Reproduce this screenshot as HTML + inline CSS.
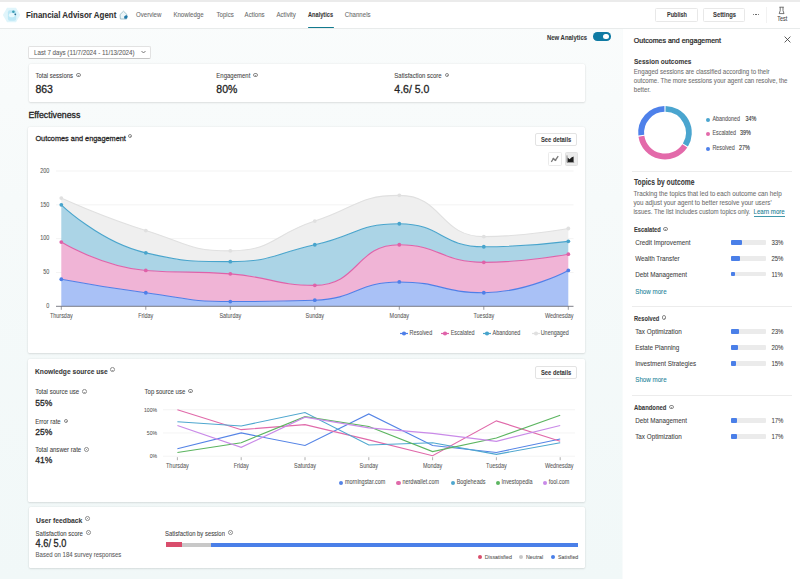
<!DOCTYPE html>
<html><head><meta charset="utf-8"><title>Analytics</title>
<style>
html,body{margin:0;padding:0;}
body{width:800px;height:579px;overflow:hidden;position:relative;font-family:"Liberation Sans", sans-serif;background:#f0f8f8;}
.t{position:absolute;white-space:pre;-webkit-text-stroke:0.06px currentColor;transform:scaleY(1.18);transform-origin:0 50%;}
.b{position:absolute;}
</style></head><body>
<div class="b" style="left:0px;top:0px;width:800px;height:579px;background:linear-gradient(to bottom,#fafcfc 0px,#f6fafa 200px,#f1f8f8 579px)"></div><div class="b" style="left:0px;top:0px;width:800px;height:2px;background:#ebebeb"></div><div class="b" style="left:0px;top:2px;width:800px;height:25.5px;background:#ffffff;border-bottom:1px solid #e8ebeb"></div><svg class="b" style="left:2px;top:6px" width="19" height="18" viewBox="0 0 19 18"><polygon points="5,1.8 14,1.8 18.3,9 14,16.3 5,16.3 0.9,9" fill="#e0f5fb"/><rect x="5.9" y="4.3" width="8.3" height="10.5" rx="2" fill="#bde8f6"/><ellipse cx="9.8" cy="9.2" rx="3" ry="2.1" fill="#e8f9fd"/><circle cx="11.4" cy="5.8" r="1.3" fill="#3c9fb6"/><circle cx="13.3" cy="8.3" r="0.9" fill="#2d6f96"/></svg><div class="t" style="left:25.5px;top:9.11px;font-size:8.53px;line-height:12.18px;font-weight:700;transform:scale(0.9327,1.14);transform-origin:0 50%;color:#303030;">Financial Advisor Agent</div><svg class="b" style="left:118px;top:9px" width="11" height="12" viewBox="0 0 11 12"><path d="M5.5,2.2 L9,5.6 L8.6,10 L2.4,10 L2,5.6 Z" fill="#eef6f8" stroke="#8db4bf" stroke-width="0.75"/><path d="M6.2,9.6 L6.6,7.2 L8.6,6.2 L9.6,7.4 L8.4,9.4 Z" fill="#1d6f9c"/><circle cx="7.9" cy="8" r="1.5" fill="#1f79aa"/></svg><div class="t" style="left:136px;top:11.23px;font-size:6.1px;line-height:8.54px;font-weight:400;color:#686868;">Overview</div><div class="t" style="left:173.4px;top:11.23px;font-size:6.1px;line-height:8.54px;font-weight:400;color:#686868;">Knowledge</div><div class="t" style="left:216.5px;top:11.23px;font-size:6.1px;line-height:8.54px;font-weight:400;color:#686868;">Topics</div><div class="t" style="left:244.6px;top:11.23px;font-size:6.1px;line-height:8.54px;font-weight:400;color:#686868;">Actions</div><div class="t" style="left:276.5px;top:11.23px;font-size:6.1px;line-height:8.54px;font-weight:400;color:#686868;">Activity</div><div class="t" style="left:308.2px;top:10.81px;font-size:6.14px;line-height:8.78px;font-weight:700;transform:scale(0.9184,1.14);transform-origin:0 50%;color:#383838;">Analytics</div><div class="t" style="left:344.8px;top:11.23px;font-size:6.1px;line-height:8.54px;font-weight:400;color:#686868;">Channels</div><div class="b" style="left:307.8px;top:26.8px;width:25.8px;height:1.6px;background:#127a8e;border-radius:1px"></div><div class="b" style="left:655px;top:8.4px;width:43px;height:13.2px;background:#fff;border:0.8px solid #e8e8e8;border-radius:1.5px;box-sizing:border-box"></div><div class="t" style="left:666.8px;top:11.33px;font-size:5.98px;line-height:8.54px;font-weight:700;transform:scale(0.9268,1.14);transform-origin:0 50%;color:#383838;">Publish</div><div class="b" style="left:703px;top:8.4px;width:42px;height:13.2px;background:#fff;border:0.8px solid #e8e8e8;border-radius:1.5px;box-sizing:border-box"></div><div class="t" style="left:712.8px;top:11.14px;font-size:6.24px;line-height:8.92px;font-weight:700;transform:scale(0.9347,1.14);transform-origin:0 50%;color:#383838;">Settings</div><div class="b" style="left:752.8px;top:14.0px;width:1.2px;height:1.2px;background:#555;border-radius:50%"></div><div class="b" style="left:755.4px;top:14.0px;width:1.2px;height:1.2px;background:#555;border-radius:50%"></div><div class="b" style="left:758.0px;top:14.0px;width:1.2px;height:1.2px;background:#555;border-radius:50%"></div><div class="b" style="left:765.5px;top:7px;width:0.7px;height:16px;background:#f2f2f2"></div><svg class="b" style="left:777px;top:6px" width="10" height="9" viewBox="0 0 10 9"><path d="M2.4,1.2 H6.8 M3.2,1.2 V4.6 L2.2,7.6 H7 L6,4.6 V1.2" fill="none" stroke="#4a4a4a" stroke-width="0.75"/></svg><div class="t" style="left:777.2px;top:15.99px;font-size:5.45px;line-height:7.63px;font-weight:400;color:#424242;">Test</div><div class="b" style="left:28.4px;top:46.3px;width:122.6px;height:12.4px;background:#fff;border:0.7px solid #e2e2e2;border-bottom-color:#c4c4c4;border-radius:2px;box-sizing:border-box"></div><div class="t" style="left:34px;top:48.76px;font-size:6.2px;line-height:8.68px;font-weight:400;color:#606060;">Last 7 days (11/7/2024 - 11/13/2024)</div><svg class="b" style="left:140.5px;top:50.3px" width="5" height="4" viewBox="0 0 5 4"><path d="M0.5,1 L2.5,3 L4.5,1" fill="none" stroke="#555" stroke-width="0.8"/></svg><div class="t" style="left:547px;top:32.50px;font-size:6.30px;line-height:9.0px;font-weight:700;transform:scale(0.9420,1.14);transform-origin:0 50%;color:#383838;">New Analytics</div><div class="b" style="left:592.7px;top:32.2px;width:18.2px;height:8.6px;background:#0f7aa3;border-radius:4.3px"></div><div class="b" style="left:603.2px;top:33.6px;width:5.8px;height:5.8px;background:#fff;border-radius:50%"></div><div class="b" style="left:28.5px;top:64.4px;width:556px;height:37.5px;background:#fff;border-radius:1.5px;box-shadow:0 0 2px rgba(0,0,0,0.09),0 1px 2px rgba(0,0,0,0.09)"></div><div class="t" style="left:35.4px;top:71.60px;font-size:6.0px;line-height:8.4px;font-weight:400;color:#424242;">Total sessions</div><div class="b" style="left:75.98px;top:72.70px;width:4.8px;height:4.8px;border:0.65px solid #8c8c8c;border-radius:50%;box-sizing:border-box"></div><div class="b" style="left:78.08px;top:74.80px;width:0.6px;height:1.3px;background:#a0a0a0"></div><div class="t" style="left:35.4px;top:81.55px;font-size:10.5px;line-height:14.7px;font-weight:400;color:#242424;-webkit-text-stroke:0.28px #242424;transform:scaleY(1.1)">863</div><div class="t" style="left:216.3px;top:71.60px;font-size:6.0px;line-height:8.4px;font-weight:400;color:#424242;">Engagement</div><div class="b" style="left:253.22px;top:72.70px;width:4.8px;height:4.8px;border:0.65px solid #8c8c8c;border-radius:50%;box-sizing:border-box"></div><div class="b" style="left:255.32px;top:74.80px;width:0.6px;height:1.3px;background:#a0a0a0"></div><div class="t" style="left:216.3px;top:81.55px;font-size:10.5px;line-height:14.7px;font-weight:400;color:#242424;-webkit-text-stroke:0.28px #242424;transform:scaleY(1.1)">80%</div><div class="t" style="left:394.3px;top:71.60px;font-size:6.0px;line-height:8.4px;font-weight:400;color:#424242;">Satisfaction score</div><div class="b" style="left:444.55px;top:72.70px;width:4.8px;height:4.8px;border:0.65px solid #8c8c8c;border-radius:50%;box-sizing:border-box"></div><div class="b" style="left:446.65px;top:74.80px;width:0.6px;height:1.3px;background:#a0a0a0"></div><div class="t" style="left:394.3px;top:81.55px;font-size:10.5px;line-height:14.7px;font-weight:400;color:#242424;-webkit-text-stroke:0.28px #242424;transform:scaleY(1.1)">4.6/ 5.0</div><div class="t" style="left:28.4px;top:108.76px;font-size:8.77px;line-height:12.28px;font-weight:400;color:#242424;-webkit-text-stroke:0.3px #242424;transform:scaleY(1.06)">Effectiveness</div><div class="b" style="left:28.3px;top:127.0px;width:556.5px;height:226.0px;background:#fff;border-radius:1.5px;box-shadow:0 0 2px rgba(0,0,0,0.09),0 1px 2px rgba(0,0,0,0.09)"></div><div class="t" style="left:35.4px;top:134.16px;font-size:7.34px;line-height:10.28px;font-weight:400;color:#242424;-webkit-text-stroke:0.25px #242424;transform:scaleY(1.1)">Outcomes and engagement</div><div class="b" style="left:127.68px;top:133.60px;width:4.8px;height:4.8px;border:0.65px solid #8c8c8c;border-radius:50%;box-sizing:border-box"></div><div class="b" style="left:129.78px;top:135.70px;width:0.6px;height:1.3px;background:#a0a0a0"></div><div class="b" style="left:535.2px;top:132.6px;width:42.2px;height:13.4px;background:#fff;border:0.7px solid #e3e3e3;border-radius:2px;box-sizing:border-box"></div><div class="t" style="left:541.2px;top:136.31px;font-size:6.00px;line-height:8.57px;font-weight:700;transform:scale(0.9663,1.14);transform-origin:0 50%;color:#383838;">See details</div><div class="b" style="left:548px;top:152px;width:13.5px;height:13.6px;background:#fff;border:0.7px solid #ebebeb;border-radius:1.5px;box-sizing:border-box"></div><div class="b" style="left:564.5px;top:152px;width:13.5px;height:13.6px;background:#ececec;border:0.7px solid #e2e2e2;border-radius:1.5px;box-sizing:border-box"></div><svg class="b" style="left:0;top:0" width="800" height="579" viewBox="0 0 800 579"><path d="M551.3,161.8 L553.4,158.6 L555.4,160.2 L558.2,156.2" fill="none" stroke="#7a7a7a" stroke-width="1.3"/><circle cx="553.4" cy="158.6" r="0.9" fill="#7a7a7a"/><circle cx="555.4" cy="160.2" r="0.9" fill="#7a7a7a"/><path d="M567.6,162 V157.6 L569.6,159.2 L571.4,157.6 L573.6,156.6 V162 Z" fill="#1e1e1e"/><path d="M567,155.4 V162.4 H574.2" fill="none" stroke="#555" stroke-width="0.6"/></svg><svg class="b" style="left:0;top:0" width="800" height="579" viewBox="0 0 800 579"><line x1="56" y1="272.48" x2="573.5" y2="272.48" stroke="#ebebeb" stroke-width="0.6"/><line x1="56" y1="238.65" x2="573.5" y2="238.65" stroke="#ebebeb" stroke-width="0.6"/><line x1="56" y1="204.83" x2="573.5" y2="204.83" stroke="#ebebeb" stroke-width="0.6"/><line x1="56" y1="171.00" x2="573.5" y2="171.00" stroke="#ebebeb" stroke-width="0.6"/><path d="M61.30,279.24 C61.30,279.24 103.40,287.17 145.80,292.77 C187.90,298.33 187.94,301.56 230.30,301.56 C272.44,301.56 273.03,301.56 314.80,300.21 C357.53,298.83 356.74,281.95 399.30,281.95 C441.24,281.95 442.09,292.77 483.80,292.77 C526.59,292.77 568.30,270.45 568.30,270.45 L568.30,306.30 C568.30,306.30 526.05,306.30 483.80,306.30 C441.55,306.30 441.55,306.30 399.30,306.30 C357.05,306.30 357.05,306.30 314.80,306.30 C272.55,306.30 272.55,306.30 230.30,306.30 C188.05,306.30 188.05,306.30 145.80,306.30 C103.55,306.30 61.30,306.30 61.30,306.30 Z" fill="#a9c1f6"/><path d="M61.30,242.03 C61.30,242.03 102.44,266.88 145.80,270.45 C186.94,273.83 188.23,270.45 230.30,273.83 C272.73,277.24 274.55,285.33 314.80,285.33 C359.05,285.33 355.31,244.74 399.30,244.74 C439.81,244.74 441.20,262.33 483.80,262.33 C525.70,262.33 568.30,254.21 568.30,254.21 L568.30,270.45 C568.30,270.45 526.59,292.77 483.80,292.77 C442.09,292.77 441.24,281.95 399.30,281.95 C356.74,281.95 357.53,298.83 314.80,300.21 C273.03,301.56 272.44,301.56 230.30,301.56 C187.94,301.56 187.90,298.33 145.80,292.77 C103.40,287.17 61.30,279.24 61.30,279.24 Z" fill="#f0b4d6"/><path d="M61.30,204.83 C61.30,204.83 100.71,242.79 145.80,252.86 C185.21,261.65 188.35,261.65 230.30,261.65 C272.85,261.65 272.77,254.16 314.80,244.74 C357.27,235.22 357.17,223.77 399.30,223.77 C441.67,223.77 440.84,246.77 483.80,246.77 C525.34,246.77 568.30,241.36 568.30,241.36 L568.30,254.21 C568.30,254.21 525.70,262.33 483.80,262.33 C441.20,262.33 439.81,244.74 399.30,244.74 C355.31,244.74 359.05,285.33 314.80,285.33 C274.55,285.33 272.73,277.24 230.30,273.83 C188.23,270.45 186.94,273.83 145.80,270.45 C102.44,266.88 61.30,242.03 61.30,242.03 Z" fill="#abd4e6"/><path d="M61.30,198.06 C61.30,198.06 102.69,217.07 145.80,230.53 C187.19,243.45 188.69,250.83 230.30,250.83 C273.19,250.83 272.25,235.03 314.80,221.06 C356.75,207.29 358.37,195.35 399.30,195.35 C442.87,195.35 439.39,236.62 483.80,236.62 C523.89,236.62 568.30,228.50 568.30,228.50 L568.30,241.36 C568.30,241.36 525.34,246.77 483.80,246.77 C440.84,246.77 441.67,223.77 399.30,223.77 C357.17,223.77 357.27,235.22 314.80,244.74 C272.77,254.16 272.85,261.65 230.30,261.65 C188.35,261.65 185.21,261.65 145.80,252.86 C100.71,242.79 61.30,204.83 61.30,204.83 Z" fill="#efefef"/><path d="M61.30,279.24 C61.30,279.24 103.40,287.17 145.80,292.77 C187.90,298.33 187.94,301.56 230.30,301.56 C272.44,301.56 273.03,301.56 314.80,300.21 C357.53,298.83 356.74,281.95 399.30,281.95 C441.24,281.95 442.09,292.77 483.80,292.77 C526.59,292.77 568.30,270.45 568.30,270.45" fill="none" stroke="#4f7fe8" stroke-width="1.1"/><circle cx="61.30" cy="279.24" r="1.9" fill="#4f7fe8"/><circle cx="145.80" cy="292.77" r="1.9" fill="#4f7fe8"/><circle cx="230.30" cy="301.56" r="1.9" fill="#4f7fe8"/><circle cx="314.80" cy="300.21" r="1.9" fill="#4f7fe8"/><circle cx="399.30" cy="281.95" r="1.9" fill="#4f7fe8"/><circle cx="483.80" cy="292.77" r="1.9" fill="#4f7fe8"/><circle cx="568.30" cy="270.45" r="1.9" fill="#4f7fe8"/><path d="M61.30,242.03 C61.30,242.03 102.44,266.88 145.80,270.45 C186.94,273.83 188.23,270.45 230.30,273.83 C272.73,277.24 274.55,285.33 314.80,285.33 C359.05,285.33 355.31,244.74 399.30,244.74 C439.81,244.74 441.20,262.33 483.80,262.33 C525.70,262.33 568.30,254.21 568.30,254.21" fill="none" stroke="#df62a9" stroke-width="1.1"/><circle cx="61.30" cy="242.03" r="1.9" fill="#df62a9"/><circle cx="145.80" cy="270.45" r="1.9" fill="#df62a9"/><circle cx="230.30" cy="273.83" r="1.9" fill="#df62a9"/><circle cx="314.80" cy="285.33" r="1.9" fill="#df62a9"/><circle cx="399.30" cy="244.74" r="1.9" fill="#df62a9"/><circle cx="483.80" cy="262.33" r="1.9" fill="#df62a9"/><circle cx="568.30" cy="254.21" r="1.9" fill="#df62a9"/><path d="M61.30,204.83 C61.30,204.83 100.71,242.79 145.80,252.86 C185.21,261.65 188.35,261.65 230.30,261.65 C272.85,261.65 272.77,254.16 314.80,244.74 C357.27,235.22 357.17,223.77 399.30,223.77 C441.67,223.77 440.84,246.77 483.80,246.77 C525.34,246.77 568.30,241.36 568.30,241.36" fill="none" stroke="#48a4cc" stroke-width="1.1"/><circle cx="61.30" cy="204.83" r="1.9" fill="#48a4cc"/><circle cx="145.80" cy="252.86" r="1.9" fill="#48a4cc"/><circle cx="230.30" cy="261.65" r="1.9" fill="#48a4cc"/><circle cx="314.80" cy="244.74" r="1.9" fill="#48a4cc"/><circle cx="399.30" cy="223.77" r="1.9" fill="#48a4cc"/><circle cx="483.80" cy="246.77" r="1.9" fill="#48a4cc"/><circle cx="568.30" cy="241.36" r="1.9" fill="#48a4cc"/><path d="M61.30,198.06 C61.30,198.06 102.69,217.07 145.80,230.53 C187.19,243.45 188.69,250.83 230.30,250.83 C273.19,250.83 272.25,235.03 314.80,221.06 C356.75,207.29 358.37,195.35 399.30,195.35 C442.87,195.35 439.39,236.62 483.80,236.62 C523.89,236.62 568.30,228.50 568.30,228.50" fill="none" stroke="#e0e0e0" stroke-width="1.1"/><circle cx="61.30" cy="198.06" r="1.9" fill="#e0e0e0"/><circle cx="145.80" cy="230.53" r="1.9" fill="#e0e0e0"/><circle cx="230.30" cy="250.83" r="1.9" fill="#e0e0e0"/><circle cx="314.80" cy="221.06" r="1.9" fill="#e0e0e0"/><circle cx="399.30" cy="195.35" r="1.9" fill="#e0e0e0"/><circle cx="483.80" cy="236.62" r="1.9" fill="#e0e0e0"/><circle cx="568.30" cy="228.50" r="1.9" fill="#e0e0e0"/><line x1="56" y1="306.3" x2="573.5" y2="306.3" stroke="#6e7079" stroke-width="0.9"/><line x1="61.30" y1="306.3" x2="61.30" y2="309.8" stroke="#6e7079" stroke-width="0.7"/><line x1="145.80" y1="306.3" x2="145.80" y2="309.8" stroke="#6e7079" stroke-width="0.7"/><line x1="230.30" y1="306.3" x2="230.30" y2="309.8" stroke="#6e7079" stroke-width="0.7"/><line x1="314.80" y1="306.3" x2="314.80" y2="309.8" stroke="#6e7079" stroke-width="0.7"/><line x1="399.30" y1="306.3" x2="399.30" y2="309.8" stroke="#6e7079" stroke-width="0.7"/><line x1="483.80" y1="306.3" x2="483.80" y2="309.8" stroke="#6e7079" stroke-width="0.7"/><line x1="568.30" y1="306.3" x2="568.30" y2="309.8" stroke="#6e7079" stroke-width="0.7"/></svg><div class="t" style="right:750.7px;top:303.09px;font-size:5.45px;line-height:7.63px;font-weight:400;color:#5a5a5a;text-align:right;">0</div><div class="t" style="right:750.7px;top:269.26px;font-size:5.45px;line-height:7.63px;font-weight:400;color:#5a5a5a;text-align:right;">50</div><div class="t" style="right:750.7px;top:235.44px;font-size:5.45px;line-height:7.63px;font-weight:400;color:#5a5a5a;text-align:right;">100</div><div class="t" style="right:750.7px;top:201.61px;font-size:5.45px;line-height:7.63px;font-weight:400;color:#5a5a5a;text-align:right;">150</div><div class="t" style="right:750.7px;top:167.78px;font-size:5.45px;line-height:7.63px;font-weight:400;color:#5a5a5a;text-align:right;">200</div><div class="t" style="left:31.30px;width:60px;text-align:center;top:313.40px;font-size:5.45px;line-height:7.6px;color:#5a5a5a">Thursday</div><div class="t" style="left:115.80px;width:60px;text-align:center;top:313.40px;font-size:5.45px;line-height:7.6px;color:#5a5a5a">Friday</div><div class="t" style="left:200.30px;width:60px;text-align:center;top:313.40px;font-size:5.45px;line-height:7.6px;color:#5a5a5a">Saturday</div><div class="t" style="left:284.80px;width:60px;text-align:center;top:313.40px;font-size:5.45px;line-height:7.6px;color:#5a5a5a">Sunday</div><div class="t" style="left:369.30px;width:60px;text-align:center;top:313.40px;font-size:5.45px;line-height:7.6px;color:#5a5a5a">Monday</div><div class="t" style="left:453.80px;width:60px;text-align:center;top:313.40px;font-size:5.45px;line-height:7.6px;color:#5a5a5a">Tuesday</div><div class="t" style="right:226.5px;top:313.38px;font-size:5.45px;line-height:7.63px;font-weight:400;color:#5a5a5a;text-align:right;">Wednesday</div><svg class="b" style="left:400px;top:330.9px" width="8" height="5" viewBox="0 0 8 5"><line x1="0" y1="2.5" x2="8" y2="2.5" stroke="#4f7fe8" stroke-width="1.2"/><circle cx="4" cy="2.5" r="2.1" fill="#4f7fe8"/></svg><div class="t" style="left:409.5px;top:329.79px;font-size:5.45px;line-height:7.63px;font-weight:400;color:#555555;">Resolved</div><svg class="b" style="left:440.5px;top:330.9px" width="8" height="5" viewBox="0 0 8 5"><line x1="0" y1="2.5" x2="8" y2="2.5" stroke="#df62a9" stroke-width="1.2"/><circle cx="4" cy="2.5" r="2.1" fill="#df62a9"/></svg><div class="t" style="left:450.7px;top:329.79px;font-size:5.45px;line-height:7.63px;font-weight:400;color:#555555;">Escalated</div><svg class="b" style="left:483px;top:330.9px" width="8" height="5" viewBox="0 0 8 5"><line x1="0" y1="2.5" x2="8" y2="2.5" stroke="#48a4cc" stroke-width="1.2"/><circle cx="4" cy="2.5" r="2.1" fill="#48a4cc"/></svg><div class="t" style="left:492.5px;top:329.79px;font-size:5.45px;line-height:7.63px;font-weight:400;color:#555555;">Abandoned</div><svg class="b" style="left:531.5px;top:330.9px" width="8" height="5" viewBox="0 0 8 5"><line x1="0" y1="2.5" x2="8" y2="2.5" stroke="#e0e0e0" stroke-width="1.2"/><circle cx="4" cy="2.5" r="2.1" fill="#e0e0e0"/></svg><div class="t" style="left:540.7px;top:329.79px;font-size:5.45px;line-height:7.63px;font-weight:400;color:#555555;">Unengaged</div><div class="b" style="left:28.4px;top:358.8px;width:556.7px;height:143.0px;background:#fff;border-radius:1.5px;box-shadow:0 0 2px rgba(0,0,0,0.09),0 1px 2px rgba(0,0,0,0.09)"></div><div class="t" style="left:35.2px;top:367.36px;font-size:7.06px;line-height:10.08px;font-weight:700;transform:scale(0.9479,1.14);transform-origin:0 50%;color:#383838;">Knowledge source use</div><div class="b" style="left:109.74px;top:367.40px;width:4.8px;height:4.8px;border:0.65px solid #8c8c8c;border-radius:50%;box-sizing:border-box"></div><div class="b" style="left:111.84px;top:369.50px;width:0.6px;height:1.3px;background:#a0a0a0"></div><div class="b" style="left:535.2px;top:366.4px;width:42.2px;height:13px;background:#fff;border:0.7px solid #e3e3e3;border-radius:2px;box-sizing:border-box"></div><div class="t" style="left:541.2px;top:369.31px;font-size:6.00px;line-height:8.57px;font-weight:700;transform:scale(0.9663,1.14);transform-origin:0 50%;color:#383838;">See details</div><div class="t" style="left:35.2px;top:388.46px;font-size:6.05px;line-height:8.47px;font-weight:400;color:#424242;">Total source use</div><div class="b" style="left:82.15px;top:389.40px;width:4.8px;height:4.8px;border:0.65px solid #8c8c8c;border-radius:50%;box-sizing:border-box"></div><div class="b" style="left:84.25px;top:391.50px;width:0.6px;height:1.3px;background:#a0a0a0"></div><div class="t" style="left:35.2px;top:398.45px;font-size:8.5px;line-height:11.9px;font-weight:400;color:#242424;-webkit-text-stroke:0.26px #242424;transform:scaleY(1.1)">55%</div><div class="t" style="left:35.2px;top:417.56px;font-size:6.05px;line-height:8.47px;font-weight:400;color:#424242;">Error rate</div><div class="b" style="left:63.65px;top:418.50px;width:4.8px;height:4.8px;border:0.65px solid #8c8c8c;border-radius:50%;box-sizing:border-box"></div><div class="b" style="left:65.75px;top:420.60px;width:0.6px;height:1.3px;background:#a0a0a0"></div><div class="t" style="left:35.2px;top:427.05px;font-size:8.5px;line-height:11.9px;font-weight:400;color:#242424;-webkit-text-stroke:0.26px #242424;transform:scaleY(1.1)">25%</div><div class="t" style="left:35.2px;top:445.96px;font-size:6.05px;line-height:8.47px;font-weight:400;color:#424242;">Total answer rate</div><div class="b" style="left:84.17px;top:446.90px;width:4.8px;height:4.8px;border:0.65px solid #8c8c8c;border-radius:50%;box-sizing:border-box"></div><div class="b" style="left:86.27px;top:449.00px;width:0.6px;height:1.3px;background:#a0a0a0"></div><div class="t" style="left:35.2px;top:455.35px;font-size:8.5px;line-height:11.9px;font-weight:400;color:#242424;-webkit-text-stroke:0.26px #242424;transform:scaleY(1.1)">41%</div><div class="t" style="left:144.6px;top:387.80px;font-size:6.0px;line-height:8.4px;font-weight:400;color:#424242;">Top source use</div><div class="b" style="left:188.19px;top:388.70px;width:4.8px;height:4.8px;border:0.65px solid #8c8c8c;border-radius:50%;box-sizing:border-box"></div><div class="b" style="left:190.29px;top:390.80px;width:0.6px;height:1.3px;background:#a0a0a0"></div><svg class="b" style="left:0;top:0" width="800" height="579" viewBox="0 0 800 579"><line x1="163" y1="456.20" x2="575" y2="456.20" stroke="#ededed" stroke-width="0.6"/><line x1="163" y1="432.95" x2="575" y2="432.95" stroke="#ededed" stroke-width="0.6"/><line x1="163" y1="409.70" x2="575" y2="409.70" stroke="#ededed" stroke-width="0.6"/><line x1="177.40" y1="457.2" x2="177.40" y2="460.2" stroke="#7a7a7a" stroke-width="0.6"/><line x1="241.20" y1="457.2" x2="241.20" y2="460.2" stroke="#7a7a7a" stroke-width="0.6"/><line x1="305.00" y1="457.2" x2="305.00" y2="460.2" stroke="#7a7a7a" stroke-width="0.6"/><line x1="368.80" y1="457.2" x2="368.80" y2="460.2" stroke="#7a7a7a" stroke-width="0.6"/><line x1="432.60" y1="457.2" x2="432.60" y2="460.2" stroke="#7a7a7a" stroke-width="0.6"/><line x1="496.40" y1="457.2" x2="496.40" y2="460.2" stroke="#7a7a7a" stroke-width="0.6"/><line x1="560.20" y1="457.2" x2="560.20" y2="460.2" stroke="#7a7a7a" stroke-width="0.6"/><polyline points="177.40,448.76 241.20,432.95 305.00,445.50 368.80,413.88 432.60,445.50 496.40,452.48 560.20,439.00" fill="none" stroke="#5584e6" stroke-width="1.15"/><polyline points="177.40,409.70 241.20,429.69 305.00,424.58 368.80,439.93 432.60,455.74 496.40,420.86 560.20,441.32" fill="none" stroke="#e06aaa" stroke-width="1.15"/><polyline points="177.40,421.79 241.20,425.97 305.00,412.49 368.80,445.04 432.60,442.71 496.40,454.34 560.20,442.71" fill="none" stroke="#4fa7cf" stroke-width="1.15"/><polyline points="177.40,452.48 241.20,442.71 305.00,416.68 368.80,426.44 432.60,451.55 496.40,438.06 560.20,415.28" fill="none" stroke="#5cb560" stroke-width="1.15"/><polyline points="177.40,425.51 241.20,447.37 305.00,417.14 368.80,427.83 432.60,433.41 496.40,441.32 560.20,425.51" fill="none" stroke="#c98ae8" stroke-width="1.15"/></svg><div class="t" style="right:643px;top:453.03px;font-size:5.1px;line-height:7.14px;font-weight:400;color:#5a5a5a;text-align:right;">0%</div><div class="t" style="right:643px;top:429.78px;font-size:5.1px;line-height:7.14px;font-weight:400;color:#5a5a5a;text-align:right;">50%</div><div class="t" style="right:643px;top:406.53px;font-size:5.1px;line-height:7.14px;font-weight:400;color:#5a5a5a;text-align:right;">100%</div><div class="t" style="left:147.40px;width:60px;text-align:center;top:462.80px;font-size:5.45px;line-height:7.6px;color:#5a5a5a">Thursday</div><div class="t" style="left:211.20px;width:60px;text-align:center;top:462.80px;font-size:5.45px;line-height:7.6px;color:#5a5a5a">Friday</div><div class="t" style="left:275.00px;width:60px;text-align:center;top:462.80px;font-size:5.45px;line-height:7.6px;color:#5a5a5a">Saturday</div><div class="t" style="left:338.80px;width:60px;text-align:center;top:462.80px;font-size:5.45px;line-height:7.6px;color:#5a5a5a">Sunday</div><div class="t" style="left:402.60px;width:60px;text-align:center;top:462.80px;font-size:5.45px;line-height:7.6px;color:#5a5a5a">Monday</div><div class="t" style="left:466.40px;width:60px;text-align:center;top:462.80px;font-size:5.45px;line-height:7.6px;color:#5a5a5a">Tuesday</div><div class="t" style="right:226.5px;top:462.79px;font-size:5.45px;line-height:7.63px;font-weight:400;color:#5a5a5a;text-align:right;">Wednesday</div><div class="b" style="left:339.0px;top:480.79999999999995px;width:4.2px;height:4.2px;background:#5584e6;border-radius:50%"></div><div class="t" style="left:345px;top:479.19px;font-size:5.45px;line-height:7.63px;font-weight:400;color:#555555;">morningstar.com</div><div class="b" style="left:396.40000000000003px;top:480.79999999999995px;width:4.2px;height:4.2px;background:#e06aaa;border-radius:50%"></div><div class="t" style="left:402.5px;top:479.19px;font-size:5.45px;line-height:7.63px;font-weight:400;color:#555555;">nerdwallet.com</div><div class="b" style="left:450.6px;top:480.79999999999995px;width:4.2px;height:4.2px;background:#4fa7cf;border-radius:50%"></div><div class="t" style="left:456.7px;top:479.19px;font-size:5.45px;line-height:7.63px;font-weight:400;color:#555555;">Bogleheads</div><div class="b" style="left:495.5px;top:480.79999999999995px;width:4.2px;height:4.2px;background:#5cb560;border-radius:50%"></div><div class="t" style="left:501.6px;top:479.19px;font-size:5.45px;line-height:7.63px;font-weight:400;color:#555555;">Investopedia</div><div class="b" style="left:542.8px;top:480.79999999999995px;width:4.2px;height:4.2px;background:#c98ae8;border-radius:50%"></div><div class="t" style="left:548.7px;top:479.19px;font-size:5.45px;line-height:7.63px;font-weight:400;color:#555555;">fool.com</div><div class="b" style="left:28.6px;top:506.6px;width:556.5px;height:61px;background:#fff;border-radius:1.5px;box-shadow:0 0 2px rgba(0,0,0,0.09),0 1px 2px rgba(0,0,0,0.09)"></div><div class="t" style="left:35.6px;top:515.76px;font-size:7.06px;line-height:10.08px;font-weight:700;transform:scale(0.9623,1.14);transform-origin:0 50%;color:#383838;">User feedback</div><div class="b" style="left:84.92px;top:516.00px;width:4.8px;height:4.8px;border:0.65px solid #8c8c8c;border-radius:50%;box-sizing:border-box"></div><div class="b" style="left:87.02px;top:518.10px;width:0.6px;height:1.3px;background:#a0a0a0"></div><div class="t" style="left:35.6px;top:529.80px;font-size:6.0px;line-height:8.4px;font-weight:400;color:#424242;">Satisfaction score</div><div class="b" style="left:85.85px;top:530.10px;width:4.8px;height:4.8px;border:0.65px solid #8c8c8c;border-radius:50%;box-sizing:border-box"></div><div class="b" style="left:87.95px;top:532.20px;width:0.6px;height:1.3px;background:#a0a0a0"></div><div class="t" style="left:35.6px;top:538.44px;font-size:9.23px;line-height:12.92px;font-weight:400;color:#242424;-webkit-text-stroke:0.26px #242424;transform:scaleY(1.1)">4.6/ 5.0</div><div class="t" style="left:35.6px;top:550.80px;font-size:6.0px;line-height:8.4px;font-weight:400;color:#5a5a5a;">Based on 184 survey responses</div><div class="t" style="left:165px;top:529.87px;font-size:5.9px;line-height:8.26px;font-weight:400;color:#424242;">Satisfaction by session</div><div class="b" style="left:227.91px;top:530.10px;width:4.8px;height:4.8px;border:0.65px solid #8c8c8c;border-radius:50%;box-sizing:border-box"></div><div class="b" style="left:230.01px;top:532.20px;width:0.6px;height:1.3px;background:#a0a0a0"></div><div class="b" style="left:165.5px;top:542.4px;width:16px;height:4.4px;background:#d94d6c"></div><div class="b" style="left:181.5px;top:542.5px;width:29px;height:4.4px;background:#c8c8c8"></div><div class="b" style="left:210.5px;top:542.5px;width:367px;height:4.4px;background:#4a7fe8"></div><div class="b" style="left:478.0px;top:555.2px;width:4.0px;height:4.0px;background:#d94d6c;border-radius:50%"></div><div class="t" style="left:484.8px;top:553.69px;font-size:5.3px;line-height:7.42px;font-weight:400;color:#555555;">Dissatisfied</div><div class="b" style="left:519.0999999999999px;top:555.2px;width:4.0px;height:4.0px;background:#c8c8c8;border-radius:50%"></div><div class="t" style="left:526px;top:553.69px;font-size:5.3px;line-height:7.42px;font-weight:400;color:#555555;">Neutral</div><div class="b" style="left:550.8px;top:555.2px;width:4.0px;height:4.0px;background:#4a7fe8;border-radius:50%"></div><div class="t" style="left:558px;top:553.69px;font-size:5.3px;line-height:7.42px;font-weight:400;color:#555555;">Satisfied</div><div class="b" style="left:621.8px;top:28.6px;width:1.6px;height:550.4px;background:#f8fbfb"></div><div class="b" style="left:623.4px;top:28.6px;width:176.6px;height:550.4px;background:#fff"></div><div class="t" style="left:633.8px;top:35.85px;font-size:7.07px;line-height:9.9px;font-weight:400;color:#242424;-webkit-text-stroke:0.22px #242424;transform:scaleY(1.1)">Outcomes and engagement</div><svg class="b" style="left:784px;top:36px" width="7" height="7" viewBox="0 0 7 7"><path d="M0.6,0.6 L6.4,6.4 M6.4,0.6 L0.6,6.4" stroke="#333" stroke-width="0.8"/></svg><div class="t" style="left:633.8px;top:56.67px;font-size:6.90px;line-height:9.86px;font-weight:700;transform:scale(0.9436,1.14);transform-origin:0 50%;color:#383838;">Session outcomes</div><div class="t" style="left:633.8px;top:68.31px;font-size:6.12px;line-height:8.57px;font-weight:400;color:#6e6e6e;">Engaged sessions are classified according to their</div><div class="t" style="left:633.8px;top:77.42px;font-size:6.12px;line-height:8.57px;font-weight:400;color:#6e6e6e;">outcome. The more sessions your agent can resolve, the</div><div class="t" style="left:633.8px;top:86.12px;font-size:6.12px;line-height:8.57px;font-weight:400;color:#6e6e6e;">better.</div><svg class="b" style="left:0;top:0" width="800" height="579" viewBox="0 0 800 579"><path d="M665.54,108.86 A23.85,23.85 0 0 1 685.42,145.02" fill="none" stroke="#4aa5cf" stroke-width="5.90"/><path d="M684.84,145.93 A23.85,23.85 0 0 1 641.41,136.23" fill="none" stroke="#e36aaa" stroke-width="5.90"/><path d="M641.28,135.15 A23.85,23.85 0 0 1 664.46,108.86" fill="none" stroke="#4e81ea" stroke-width="5.90"/></svg><div class="b" style="left:706.0px;top:117.7px;width:4.0px;height:4.0px;background:#4aa5cf;border-radius:50%"></div><div class="t" style="left:712.4px;top:115.92px;font-size:5.4px;line-height:7.56px;font-weight:400;color:#555555;">Abandoned</div><div class="t" style="left:745.6px;top:115.92px;font-size:5.4px;line-height:7.56px;font-weight:400;color:#333333;-webkit-text-stroke:0.1px #333;transform:scaleY(1.18)">34%</div><div class="b" style="left:706.0px;top:131.7px;width:4.0px;height:4.0px;background:#e36aaa;border-radius:50%"></div><div class="t" style="left:712.4px;top:129.92px;font-size:5.4px;line-height:7.56px;font-weight:400;color:#555555;">Escalated</div><div class="t" style="left:740px;top:129.92px;font-size:5.4px;line-height:7.56px;font-weight:400;color:#333333;-webkit-text-stroke:0.1px #333;transform:scaleY(1.18)">39%</div><div class="b" style="left:706.0px;top:146.7px;width:4.0px;height:4.0px;background:#4e81ea;border-radius:50%"></div><div class="t" style="left:712.4px;top:144.92px;font-size:5.4px;line-height:7.56px;font-weight:400;color:#555555;">Resolved</div><div class="t" style="left:739px;top:144.92px;font-size:5.4px;line-height:7.56px;font-weight:400;color:#333333;-webkit-text-stroke:0.1px #333;transform:scaleY(1.18)">27%</div><div class="b" style="left:632px;top:170.6px;width:160px;height:0.7px;background:#ececec"></div><div class="t" style="left:633.5px;top:178.28px;font-size:7.16px;line-height:10.23px;font-weight:700;transform:scale(0.9350,1.14);transform-origin:0 50%;color:#383838;">Topics by outcome</div><div class="t" style="left:633.5px;top:189.91px;font-size:6.28px;line-height:8.79px;font-weight:400;color:#6e6e6e;">Tracking the topics that led to each outcome can help</div><div class="t" style="left:633.5px;top:199.13px;font-size:6.24px;line-height:8.74px;font-weight:400;color:#6e6e6e;">you adjust your agent to better resolve your users'</div><div class="t" style="left:633.5px;top:208.25px;font-size:6.07px;line-height:8.5px;font-weight:400;color:#6e6e6e;">issues. The list includes custom topics only.</div><div class="t" style="left:753.6px;top:208.23px;font-size:6.1px;line-height:8.54px;font-weight:400;color:#0f7a91;">Learn more</div><div class="b" style="left:753.8px;top:215.6px;width:31px;height:0.6px;background:#3f97aa"></div><div class="t" style="left:633.5px;top:225.63px;font-size:5.98px;line-height:8.54px;font-weight:700;transform:scale(0.9597,1.14);transform-origin:0 50%;color:#383838;">Escalated</div><div class="b" style="left:663.19px;top:226.50px;width:4.8px;height:4.8px;border:0.65px solid #8c8c8c;border-radius:50%;box-sizing:border-box"></div><div class="b" style="left:665.29px;top:228.60px;width:0.6px;height:1.3px;background:#a0a0a0"></div><div class="t" style="left:635.2px;top:238.89px;font-size:6.3px;line-height:8.82px;font-weight:400;color:#424242;">Credit Improvement</div><div class="b" style="left:731px;top:240.1px;width:34.8px;height:4.6px;background:#ebebeb;border-radius:1px"></div><div class="b" style="left:731px;top:240.1px;width:11.484px;height:4.6px;background:#4a7fe8;border-radius:1px"></div><div class="t" style="left:771.4px;top:239.10px;font-size:6.0px;line-height:8.4px;font-weight:400;color:#424242;">33%</div><div class="t" style="left:635.2px;top:254.79px;font-size:6.3px;line-height:8.82px;font-weight:400;color:#424242;">Wealth Transfer</div><div class="b" style="left:731px;top:256.0px;width:34.8px;height:4.6px;background:#ebebeb;border-radius:1px"></div><div class="b" style="left:731px;top:256.0px;width:8.7px;height:4.6px;background:#4a7fe8;border-radius:1px"></div><div class="t" style="left:771.4px;top:255.00px;font-size:6.0px;line-height:8.4px;font-weight:400;color:#424242;">25%</div><div class="t" style="left:635.2px;top:270.69px;font-size:6.3px;line-height:8.82px;font-weight:400;color:#424242;">Debt Management</div><div class="b" style="left:731px;top:271.9px;width:34.8px;height:4.6px;background:#ebebeb;border-radius:1px"></div><div class="b" style="left:731px;top:271.9px;width:3.828px;height:4.6px;background:#4a7fe8;border-radius:1px"></div><div class="t" style="left:771.4px;top:270.90px;font-size:6.0px;line-height:8.4px;font-weight:400;color:#424242;">11%</div><div class="t" style="left:635.3px;top:287.66px;font-size:6.2px;line-height:8.68px;font-weight:400;color:#1a8299;">Show more</div><div class="b" style="left:632px;top:306.3px;width:160px;height:0.7px;background:#ececec"></div><div class="t" style="left:633.5px;top:314.55px;font-size:5.95px;line-height:8.5px;font-weight:700;transform:scale(0.9568,1.14);transform-origin:0 50%;color:#383838;">Resolved</div><div class="b" style="left:661.70px;top:315.40px;width:4.8px;height:4.8px;border:0.65px solid #8c8c8c;border-radius:50%;box-sizing:border-box"></div><div class="b" style="left:663.80px;top:317.50px;width:0.6px;height:1.3px;background:#a0a0a0"></div><div class="t" style="left:635.2px;top:328.09px;font-size:6.3px;line-height:8.82px;font-weight:400;color:#424242;">Tax Optimization</div><div class="b" style="left:731px;top:329.3px;width:34.8px;height:4.6px;background:#ebebeb;border-radius:1px"></div><div class="b" style="left:731px;top:329.3px;width:8.004px;height:4.6px;background:#4a7fe8;border-radius:1px"></div><div class="t" style="left:771.4px;top:328.30px;font-size:6.0px;line-height:8.4px;font-weight:400;color:#424242;">23%</div><div class="t" style="left:635.2px;top:343.99px;font-size:6.3px;line-height:8.82px;font-weight:400;color:#424242;">Estate Planning</div><div class="b" style="left:731px;top:345.2px;width:34.8px;height:4.6px;background:#ebebeb;border-radius:1px"></div><div class="b" style="left:731px;top:345.2px;width:6.96px;height:4.6px;background:#4a7fe8;border-radius:1px"></div><div class="t" style="left:771.4px;top:344.20px;font-size:6.0px;line-height:8.4px;font-weight:400;color:#424242;">20%</div><div class="t" style="left:635.2px;top:359.89px;font-size:6.3px;line-height:8.82px;font-weight:400;color:#424242;">Investment Strategies</div><div class="b" style="left:731px;top:361.09999999999997px;width:34.8px;height:4.6px;background:#ebebeb;border-radius:1px"></div><div class="b" style="left:731px;top:361.09999999999997px;width:5.22px;height:4.6px;background:#4a7fe8;border-radius:1px"></div><div class="t" style="left:771.4px;top:360.10px;font-size:6.0px;line-height:8.4px;font-weight:400;color:#424242;">15%</div><div class="t" style="left:635.3px;top:376.16px;font-size:6.2px;line-height:8.68px;font-weight:400;color:#1a8299;">Show more</div><div class="b" style="left:632px;top:395.2px;width:160px;height:0.7px;background:#ececec"></div><div class="t" style="left:633.5px;top:403.56px;font-size:6.22px;line-height:8.89px;font-weight:700;transform:scale(0.9493,1.14);transform-origin:0 50%;color:#383838;">Abandoned</div><div class="b" style="left:668.89px;top:404.50px;width:4.8px;height:4.8px;border:0.65px solid #8c8c8c;border-radius:50%;box-sizing:border-box"></div><div class="b" style="left:670.99px;top:406.60px;width:0.6px;height:1.3px;background:#a0a0a0"></div><div class="t" style="left:635.2px;top:416.89px;font-size:6.3px;line-height:8.82px;font-weight:400;color:#424242;">Debt Management</div><div class="b" style="left:731px;top:418.09999999999997px;width:34.8px;height:4.6px;background:#ebebeb;border-radius:1px"></div><div class="b" style="left:731px;top:418.09999999999997px;width:5.916px;height:4.6px;background:#4a7fe8;border-radius:1px"></div><div class="t" style="left:771.4px;top:417.10px;font-size:6.0px;line-height:8.4px;font-weight:400;color:#424242;">17%</div><div class="t" style="left:635.2px;top:432.89px;font-size:6.3px;line-height:8.82px;font-weight:400;color:#424242;">Tax Optimization</div><div class="b" style="left:731px;top:434.09999999999997px;width:34.8px;height:4.6px;background:#ebebeb;border-radius:1px"></div><div class="b" style="left:731px;top:434.09999999999997px;width:5.916px;height:4.6px;background:#4a7fe8;border-radius:1px"></div><div class="t" style="left:771.4px;top:433.10px;font-size:6.0px;line-height:8.4px;font-weight:400;color:#424242;">17%</div>
</body></html>
